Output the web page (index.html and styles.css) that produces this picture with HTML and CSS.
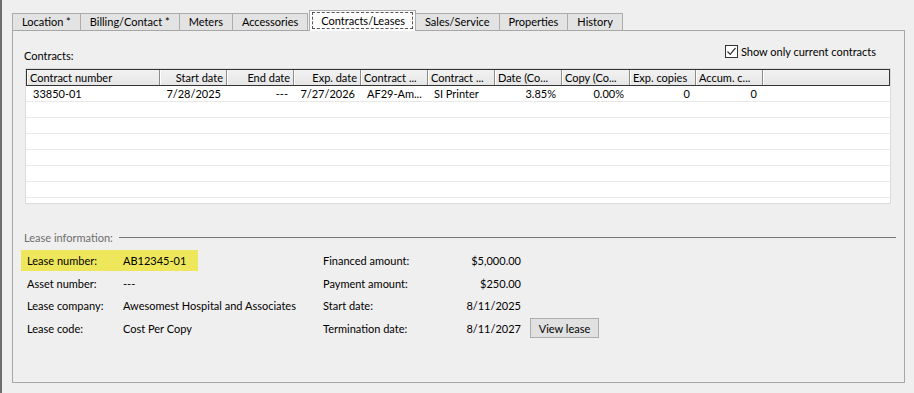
FILE: index.html
```html
<!DOCTYPE html>
<html>
<head>
    <meta charset="UTF-8">
    <title>Contracts/Leases</title>
    <link rel="stylesheet" href="styles.css">
</head>
<body>
<div class="window">
    <div class="tabs">
        <div class="tab">Location *</div>
        <div class="tab">Billing/Contact *</div>
        <div class="tab">Meters</div>
        <div class="tab">Accessories</div>
        <div class="tab selected"><span class="focus">Contracts/Leases</span></div>
        <div class="tab">Sales/Service</div>
        <div class="tab">Properties</div>
        <div class="tab">History</div>
    </div>
    <div class="panel">
        <div class="contracts-head">
            <div class="caption">Contracts:</div>
            <label class="check">
                <span class="box">
                    <svg width="11" height="11" viewBox="0 0 11 11"><path d="M1.5 5.5 L4.2 8.3 L9.5 2" fill="none" stroke="#333" stroke-width="1.2"/></svg>
                </span>
                Show only current contracts
            </label>
        </div>

        <div class="grid">
            <div class="grid-head">
                <div class="hcell">Contract number</div>
                <div class="hcell right">Start date</div>
                <div class="hcell right">End date</div>
                <div class="hcell right">Exp. date</div>
                <div class="hcell">Contract ...</div>
                <div class="hcell">Contract ...</div>
                <div class="hcell">Date (Co...</div>
                <div class="hcell">Copy (Co...</div>
                <div class="hcell">Exp. copies</div>
                <div class="hcell">Accum. c...</div>
                <div class="hcell last"></div>
            </div>
            <div class="grid-row">
                <div class="cell">33850-01</div>
                <div class="cell right">7/28/2025</div>
                <div class="cell right">---</div>
                <div class="cell right">7/27/2026</div>
                <div class="cell">AF29-Am...</div>
                <div class="cell">SI Printer</div>
                <div class="cell right">3.85%</div>
                <div class="cell right">0.00%</div>
                <div class="cell right">0</div>
                <div class="cell right">0</div>
                <div class="cell"></div>
            </div>
            <div class="grid-row"></div>
            <div class="grid-row"></div>
            <div class="grid-row"></div>
            <div class="grid-row"></div>
            <div class="grid-row"></div>
            <div class="grid-row"></div>
            <div class="grid-row"></div>
        </div>

        <div class="section-title">
            <span>Lease information:</span>
            <div class="rule"></div>
        </div>

        <div class="lease">
            <div class="lease-col">
                <div class="lrow highlight"><span class="llabel">Lease number:</span><span>AB12345-01</span></div>
                <div class="lrow"><span class="llabel">Asset number:</span><span>---</span></div>
                <div class="lrow"><span class="llabel">Lease company:</span><span>Awesomest Hospital and Associates</span></div>
                <div class="lrow"><span class="llabel">Lease code:</span><span>Cost Per Copy</span></div>
            </div>
            <div class="lease-col">
                <div class="rrow"><span class="rlabel">Financed amount:</span><span class="rvalue">$5,000.00</span></div>
                <div class="rrow"><span class="rlabel">Payment amount:</span><span class="rvalue">$250.00</span></div>
                <div class="rrow"><span class="rlabel">Start date:</span><span class="rvalue">8/11/2025</span></div>
                <div class="rrow"><span class="rlabel">Termination date:</span><span class="rvalue">8/11/2027</span><button class="btn">View lease</button></div>
            </div>
        </div>
    </div>
</div>
</body>
</html>
```

FILE: styles.css
```css
/* Contracts/Leases tab */

body {
    margin: 0;
    padding: 0;
    background: #f0efef;
    font-family: Lato, "Liberation Sans", sans-serif;
    font-size: 11px;
    color: #000;
}

.window {
    height: 393px;
    box-sizing: border-box;
    border-left: 2px solid #6e6e6e;
    padding: 10px 0 0 10px;
}

/* tabs */

.tabs {
    display: flex;
    align-items: flex-end;
    height: 20px;
}

.tab {
    box-sizing: border-box;
    height: 17px;
    line-height: 15px;
    padding: 0 9px;
    margin-right: -1px;
    background: #e3e3e3;
    border: 1px solid #acacac;
    border-bottom: none;
    white-space: nowrap;
}

.tab.selected {
    position: relative;
    z-index: 1;
    height: 21px;
    margin: 0 -1px -1px 2px;
    padding: 1px 2px 0;
    background: #fdfdfd;
}

.focus {
    display: block;
    line-height: 15px;
    padding: 0 7px 0 8px;
    border: 1px dashed #555;
}

.panel {
    width: 893px;
    height: 353px;
    box-sizing: border-box;
    border: 1px solid #a7a7a7;
}

/* contracts grid */

.contracts-head {
    display: flex;
    justify-content: space-between;
    height: 37px;
    box-sizing: border-box;
    padding: 0 28px 0 11px;
}

.caption {
    align-self: flex-end;
    line-height: 15px;
    margin-bottom: 5px;
}

.check {
    display: flex;
    align-items: center;
    gap: 3px;
    margin-top: 14px;
    height: 13px;
    line-height: 13px;
}

.box {
    display: flex;
    align-items: center;
    justify-content: center;
    width: 13px;
    height: 13px;
    box-sizing: border-box;
    border: 1px solid #333;
    background: #fff;
}

.grid {
    margin-left: 12px;
    width: 866px;
    height: 136px;
    box-sizing: border-box;
    border: 1px solid #dcdcdc;
    background: #fff;
    overflow: hidden;
}

.grid-head, .grid-row {
    display: grid;
    grid-template-columns: 133px 67px 67px 67px 67px 67px 67px 68px 66px 67px 1fr;
}

.grid-head {
    height: 17px;
    box-sizing: border-box;
    border: 1px solid #333;
    background: linear-gradient(#f2f2f2, #e6e6e6);
}

.hcell {
    line-height: 15px;
    padding: 0 3px;
    border-right: 1px solid #8c8c8c;
    box-shadow: inset 1px 0 #fff;
    white-space: nowrap;
    overflow: hidden;
}

.hcell.last {
    border-right: none;
}

.grid-row {
    height: 16px;
    box-sizing: border-box;
    padding-left: 1px;
    border-bottom: 1px solid #e8e8e8;
}

.cell {
    line-height: 15px;
    padding: 0 6px;
    white-space: nowrap;
    overflow: hidden;
}

.right {
    text-align: right;
}

/* lease info */

.section-title {
    display: flex;
    align-items: center;
    margin: 26px 8px 0 11px;
    line-height: 15px;
    color: #6d6d6d;
}

.rule {
    flex: 1;
    height: 1px;
    margin-left: 6px;
    background: #777;
}

.lease {
    display: flex;
    margin: 5px 0 0 8px;
}

.lease-col {
    display: flex;
    flex-direction: column;
    gap: 1.5px;
}

.lease-col:first-child {
    width: 302px;
}

.lrow {
    display: flex;
    align-items: center;
    height: 21px;
    box-sizing: border-box;
    padding-left: 6px;
}

.lrow.highlight {
    width: 177px;
    background: #efe75b;
}

.llabel {
    width: 96px;
}

.rrow {
    display: flex;
    align-items: center;
    height: 21px;
}

.rlabel {
    width: 130px;
}

.rvalue {
    width: 68px;
    text-align: right;
}

.btn {
    margin-left: 9px;
    width: 69px;
    height: 20px;
    padding: 0;
    background: #e1e1e1;
    border: 1px solid #adadad;
    font-family: inherit;
    font-size: 11px;
    color: #000;
}
```
